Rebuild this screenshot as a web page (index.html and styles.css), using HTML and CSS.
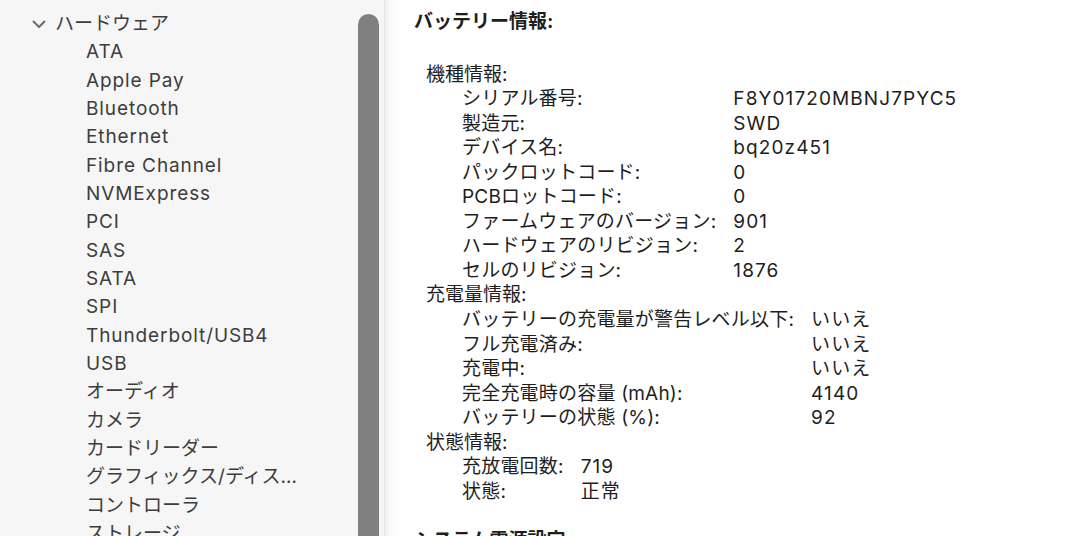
FILE: index.html
```html
<!DOCTYPE html>
<html lang="ja">
<head>
<meta charset="utf-8">
<title>システム情報</title>
<link rel="stylesheet" href="styles.css">
</head>
<body>
<div class="window">
  <aside class="sidebar">
    <ul class="tree">
      <li class="group">
        <svg class="chev" width="14" height="9" viewBox="0 0 14 9"><path d="M1.5 1.5 L7 7 L12.5 1.5" fill="none" stroke="#6a6a6a" stroke-width="2" stroke-linecap="round" stroke-linejoin="round"/></svg>
        <span>ハードウェア</span>
      </li>
      <li class="item lat">ATA</li>
      <li class="item lat">Apple Pay</li>
      <li class="item lat">Bluetooth</li>
      <li class="item lat">Ethernet</li>
      <li class="item lat">Fibre Channel</li>
      <li class="item lat">NVMExpress</li>
      <li class="item lat">PCI</li>
      <li class="item lat">SAS</li>
      <li class="item lat">SATA</li>
      <li class="item lat">SPI</li>
      <li class="item lat">Thunderbolt/USB4</li>
      <li class="item lat">USB</li>
      <li class="item">オーディオ</li>
      <li class="item">カメラ</li>
      <li class="item">カードリーダー</li>
      <li class="item">グラフィックス/ディス…</li>
      <li class="item">コントローラ</li>
      <li class="item">ストレージ</li>
    </ul>
    <div class="scrollbar"><div class="thumb"></div></div>
  </aside>
  <main class="content">
    <h1 class="title">バッテリー情報:</h1>
    <section class="section">
      <div class="sec-head">機種情報:</div>
      <div class="kv">
        <span>シリアル番号:</span><span class="val">F8Y01720MBNJ7PYC5</span>
        <span>製造元:</span><span class="val">SWD</span>
        <span>デバイス名:</span><span class="val">bq20z451</span>
        <span>パックロットコード:</span><span class="val">0</span>
        <span>PCBロットコード:</span><span class="val">0</span>
        <span>ファームウェアのバージョン:</span><span class="val">901</span>
        <span>ハードウェアのリビジョン:</span><span class="val">2</span>
        <span>セルのリビジョン:</span><span class="val">1876</span>
      </div>
    </section>
    <section class="section">
      <div class="sec-head">充電量情報:</div>
      <div class="kv">
        <span>バッテリーの充電量が警告レベル以下:</span><span class="val">いいえ</span>
        <span>フル充電済み:</span><span class="val">いいえ</span>
        <span>充電中:</span><span class="val">いいえ</span>
        <span>完全充電時の容量 (mAh):</span><span class="val">4140</span>
        <span>バッテリーの状態 (%):</span><span class="val">92</span>
      </div>
    </section>
    <section class="section">
      <div class="sec-head">状態情報:</div>
      <div class="kv">
        <span>充放電回数:</span><span class="val">719</span>
        <span>状態:</span><span class="val">正常</span>
      </div>
    </section>
    <h1 class="title next">システム電源設定:</h1>
  </main>
</div>
</body>
</html>
```
FILE: styles.css
```css
html, body {
  margin: 0;
  padding: 0;
}
body {
  width: 1080px;
  height: 536px;
  overflow: hidden;
  background: #ffffff;
  font-family: "Inter", "Noto Sans CJK JP", sans-serif;
}
.window {
  display: flex;
  width: 1080px;
  height: 536px;
  overflow: hidden;
}
.sidebar {
  width: 385px;
  flex: none;
  display: flex;
  background: #f6f6f6;
  border-right: 1px solid #e4e4e4;
  box-sizing: border-box;
}
.tree {
  list-style: none;
  margin: 0;
  padding: 10px 0 0 0;
  flex: 1;
  color: #3d3d3d;
  font-size: 19px;
  line-height: 28.33px;
  white-space: nowrap;
}
.group {
  display: flex;
  align-items: center;
  padding-left: 32px;
  gap: 9px;
}
.chev {
  display: block;
  margin-top: 1px;
}
.item {
  padding-left: 86px;
}
.item.lat {
  letter-spacing: 0.9px;
}
.scrollbar {
  width: 21px;
  flex: none;
  margin: 14px 5px 0 0;
}
.thumb {
  width: 21px;
  height: 600px;
  background: #808080;
  border-radius: 10.5px 10.5px 0 0;
}
.content {
  flex: 1;
  padding: 10px 0 0 29px;
  background: linear-gradient(to right, #efefef 0px, #fafafa 6px, #ffffff 16px);
  color: #1e1e1e;
  font-size: 19px;
  line-height: 24.55px;
  white-space: nowrap;
}
.title {
  margin: 0;
  font-size: 19px;
  font-weight: 700;
  line-height: 24.5px;
}
.title.next {
  margin-top: 25px;
}
.section:first-of-type {
  margin-top: 28px;
}
.sec-head {
  padding-left: 12px;
}
.kv {
  display: grid;
  grid-template-columns: max-content 1fr;
  column-gap: 17px;
  padding-left: 48px;
}
.kv > span {
  letter-spacing: 0.2px;
}
.kv > .val {
  letter-spacing: 1.1px;
}
```
